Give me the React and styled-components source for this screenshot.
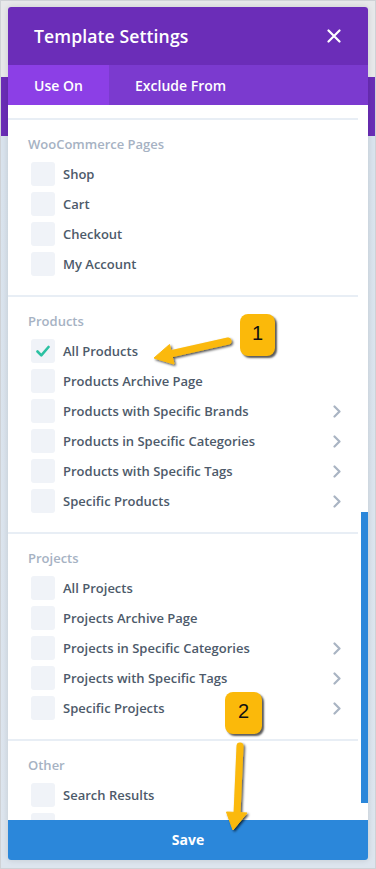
import React from "react";
import styled, { createGlobalStyle } from "styled-components";

const Global = createGlobalStyle`
  html, body { margin: 0; padding: 0; }
  body { font-family: "Open Sans", "Liberation Sans", sans-serif; }
  * { box-sizing: border-box; }
`;

const Page = styled.div`
  position: relative;
  width: 376px;
  height: 869px;
  border: 1px solid #cfd2d6;
  background: linear-gradient(
    to bottom,
    #e7e8ea 0,
    #e7e8ea 76px,
    #6a2db6 76px,
    #6a2db6 135px,
    #d9e3ed 135px,
    #dde5ee 100%
  );
  padding: 6px 7px 0 7px;
  overflow: hidden;
`;

const Modal = styled.div`
  width: 360px;
  height: 853px;
  display: flex;
  flex-direction: column;
  border-radius: 3px;
  overflow: hidden;
  background: #fff;
  box-shadow: 0 0 6px rgba(0, 0, 0, 0.12);
`;

const Header = styled.div`
  height: 58px;
  flex: none;
  background: #6b2db8;
  display: flex;
  align-items: center;
  justify-content: space-between;
  padding: 0 26px 0 26px;
`;

const Title = styled.h1`
  margin: 0;
  color: #fff;
  font-size: 17.6px;
  font-weight: 600;
  letter-spacing: 0.1px;
`;

const Close = styled.button`
  border: 0;
  background: none;
  padding: 0;
  width: 16px;
  height: 16px;
  display: flex;
  align-items: center;
  justify-content: center;
`;

const Tabs = styled.div`
  height: 40px;
  flex: none;
  background: #7b3acf;
  display: flex;
`;

const Tab = styled.div`
  height: 40px;
  display: flex;
  align-items: center;
  padding: 0 26px;
  color: #fff;
  font-size: 14px;
  font-weight: 600;
  background: ${(p) => (p.$active ? "#8c3fe6" : "transparent")};
  width: ${(p) => (p.$active ? "101px" : "auto")};
`;

const Body = styled.div`
  position: relative;
  flex: 1;
  overflow: hidden;
  padding-top: 13px;
`;

const Divider = styled.div`
  height: 2px;
  margin-right: 10px;
  background: #e8eef5;
`;

const Section = styled.section`
  padding: 14px 27px 19px 20px;
`;

const Heading = styled.div`
  height: 20px;
  line-height: 20px;
  color: #a6b2c3;
  font-size: 13px;
  font-weight: 600;
  margin-bottom: 8px;
`;

const Rows = styled.div`
  display: flex;
  flex-direction: column;
  gap: 6px;
  padding-left: 3px;
`;

const Row = styled.div`
  height: 24px;
  display: flex;
  align-items: center;
  gap: 8px;
`;

const Box = styled.span`
  width: 24px;
  height: 24px;
  flex: none;
  border-radius: 3px;
  background: #f0f3f8;
  display: flex;
  align-items: center;
  justify-content: center;
`;

const Label = styled.span`
  flex: 1;
  color: #4d5a6a;
  font-size: 13px;
  font-weight: 600;
  white-space: nowrap;
`;

const Scrollbar = styled.div`
  position: absolute;
  right: 0;
  top: 407px;
  width: 7px;
  height: 291px;
  background: #2b87da;
`;

const Save = styled.button`
  height: 40px;
  flex: none;
  border: 0;
  background: #2b87da;
  color: #fff;
  font-family: "Open Sans", "Liberation Sans", sans-serif;
  font-size: 14px;
  font-weight: 700;
  display: flex;
  align-items: center;
  justify-content: center;
  padding-bottom: 2px;
`;

const Badge = styled.div`
  position: absolute;
  left: ${(p) => p.$x}px;
  top: ${(p) => p.$y}px;
  width: ${(p) => p.$w}px;
  height: ${(p) => p.$h}px;
  border-radius: 8px;
  background: #fbb90a;
  box-shadow: 2px 2px 2px rgba(0, 0, 0, 0.65);
  display: flex;
  align-items: center;
  justify-content: center;
  color: #111;
  font-family: "Liberation Sans", Arial, sans-serif;
  font-size: 20px;
  padding-bottom: 3px;
`;

const Overlay = styled.svg`
  position: absolute;
  left: -1px;
  top: -1px;
  width: 376px;
  height: 869px;
  pointer-events: none;
`;

const Check = () => (
  <svg width="14" height="12" viewBox="0 0 14 12">
    <path d="M1.5 6.5l3.8 3.8L12.5 2" fill="none" stroke="#2bc1a2" strokeWidth="2.6" strokeLinecap="round" strokeLinejoin="round" />
  </svg>
);

const Chevron = () => (
  <svg width="8" height="13" viewBox="0 0 8 13">
    <path d="M1.5 1.5l5 5-5 5" fill="none" stroke="#a9b4c3" strokeWidth="2.2" strokeLinecap="round" strokeLinejoin="round" />
  </svg>
);

const sections = [
  {
    title: "WooCommerce Pages",
    items: [["Shop"], ["Cart"], ["Checkout"], ["My Account"]],
  },
  {
    title: "Products",
    items: [
      ["All Products", false, true],
      ["Products Archive Page"],
      ["Products with Specific Brands", true],
      ["Products in Specific Categories", true],
      ["Products with Specific Tags", true],
      ["Specific Products", true],
    ],
  },
  {
    title: "Projects",
    items: [
      ["All Projects"],
      ["Projects Archive Page"],
      ["Projects in Specific Categories", true],
      ["Projects with Specific Tags", true],
      ["Specific Projects", true],
    ],
  },
  {
    title: "Other",
    items: [["Search Results"], [""]],
    last: true,
  },
];

export default function App() {
  return (
    <>
      <Global />
      <Page>
        <Modal>
          <Header>
            <Title>Template Settings</Title>
            <Close aria-label="close">
              <svg width="14" height="14" viewBox="0 0 14 14">
                <path d="M1.5 1.5l11 11M12.5 1.5l-11 11" stroke="#fff" strokeWidth="2.2" strokeLinecap="round" />
              </svg>
            </Close>
          </Header>
          <Tabs>
            <Tab $active>Use On</Tab>
            <Tab>Exclude From</Tab>
          </Tabs>
          <Body>
            <Divider />
            {sections.map((s) => (
              <React.Fragment key={s.title}>
                <Section>
                  <Heading>{s.title}</Heading>
                  <Rows>
                    {s.items.map(([label, more, checked], i) => (
                      <Row key={label + i}>
                        <Box>{checked && <Check />}</Box>
                        <Label>{label}</Label>
                        {more && <Chevron />}
                      </Row>
                    ))}
                  </Rows>
                </Section>
                {!s.last && <Divider />}
              </React.Fragment>
            ))}
            <Scrollbar />
          </Body>
          <Save>Save</Save>
        </Modal>

        <Overlay viewBox="0 0 376 869">
          <defs>
            <filter id="sh" x="-20%" y="-20%" width="140%" height="140%">
              <feDropShadow dx="1.5" dy="1.5" stdDeviation="1" floodColor="#000" floodOpacity="0.7" />
            </filter>
          </defs>
          <g filter="url(#sh)" fill="#fbb90a" stroke="#fbb90a">
            <line x1="228" y1="341" x2="170" y2="354" strokeWidth="7" strokeLinecap="round" />
            <polygon points="154,358 169.5,344.5 174,364" strokeWidth="1" strokeLinejoin="round" />
            <line x1="240" y1="746" x2="237" y2="814" strokeWidth="7" strokeLinecap="round" />
            <polygon points="233,830 226.5,812 247,813" strokeWidth="1" strokeLinejoin="round" />
          </g>
        </Overlay>
        <Badge $x={239} $y={313} $w={35} $h={42}>1</Badge>
        <Badge $x={224} $y={691} $w={37} $h={42}>2</Badge>
      </Page>
    </>
  );
}
